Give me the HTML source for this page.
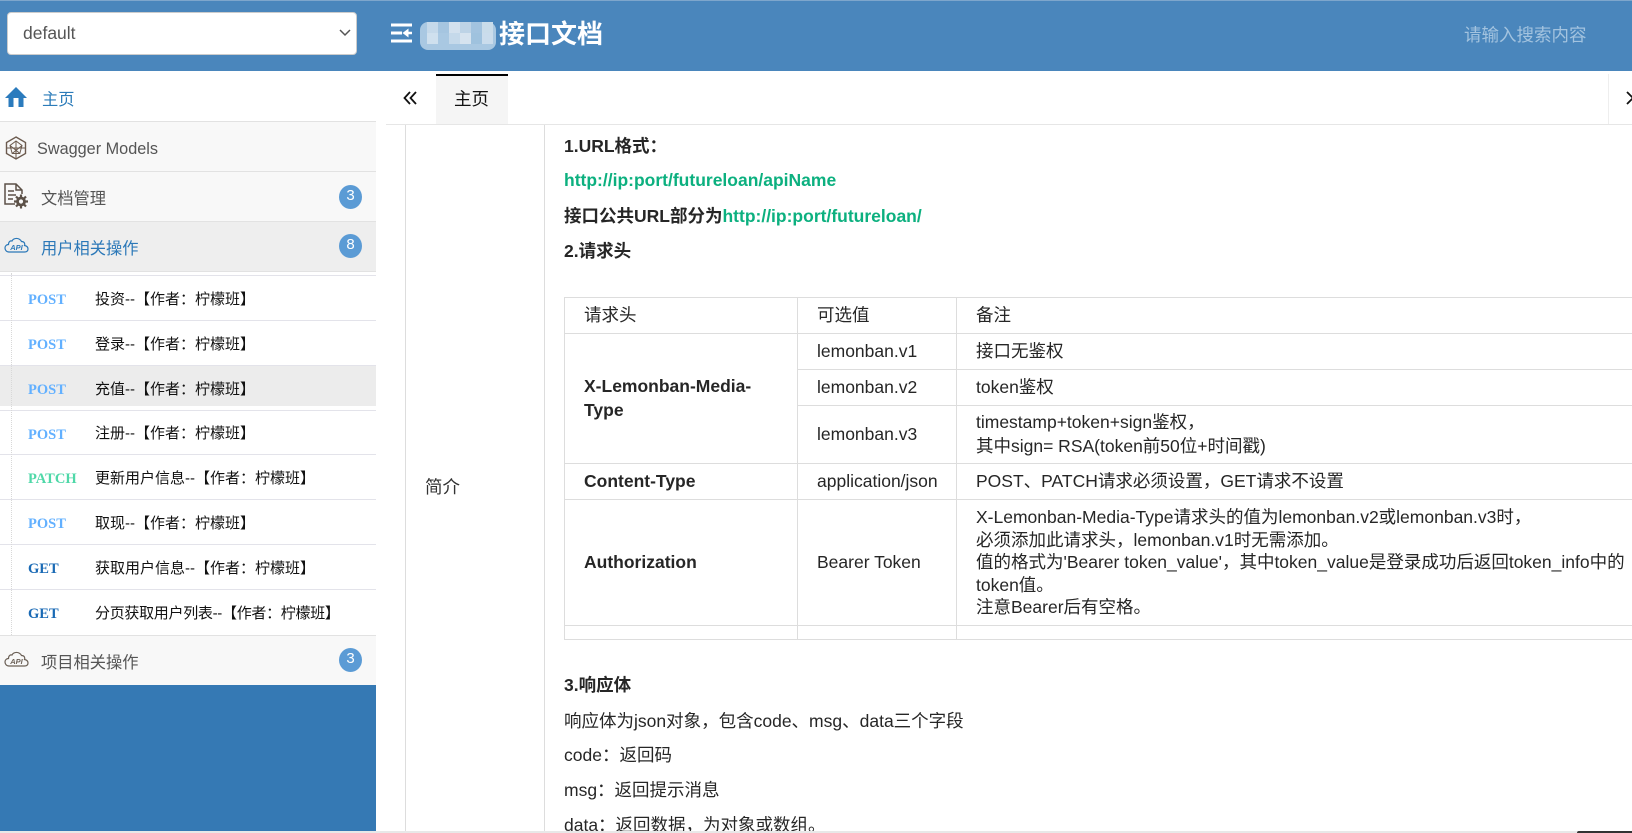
<!DOCTYPE html>
<html lang="zh-CN">
<head>
<meta charset="utf-8">
<title>接口文档</title>
<style>
*{box-sizing:border-box}
html,body{margin:0;padding:0;width:1632px;height:833px;overflow:hidden;background:#fff}
body{position:relative;font-family:"Liberation Sans","Noto Sans CJK SC",sans-serif;color:#262626}
.a{position:absolute;white-space:nowrap}
.hdr{left:0;top:0;width:1632px;height:71px;background:#4a86bc;border-top:1px solid #7ea6cc}
.sel{left:7px;top:12px;width:350px;height:43px;background:#fff;border:1px solid #ccc;border-radius:4px;color:#555;font-size:17.5px;line-height:41px;padding-left:15px}
.m{position:absolute;width:11px;height:11px}
.item{left:0;width:376px;height:50px;background:#f8f8f8;border-bottom:1px solid #e2e2e2;color:#555;font-size:16.25px}
.lbl{position:absolute;left:41px;top:0;line-height:50px}
.badge{position:absolute;left:339px;width:23px;height:24px;border-radius:50%;background:#5b9bd5;color:#fff;font-size:15px;line-height:22px;text-align:center}
.row{left:0;width:376px;height:45px;border-top:1px solid #e3e3ea;font-size:15px;color:#111}
.row b{position:absolute;left:28px;top:2px;line-height:44px;font-family:"Liberation Serif","Noto Serif CJK SC",serif;font-size:14.5px}
.row span{position:absolute;left:95px;top:2px;line-height:44px}
.post{color:#62b0ff}.patch{color:#4fd8a8}.get{color:#1a6ab5}
.p{left:564px;font-size:17.5px;line-height:24px;color:#262626}
.p b{font-weight:bold}
.g{color:#0cb07f;font-weight:bold}
table{position:absolute;left:564px;top:297px;width:1100px;border-collapse:collapse;table-layout:fixed;font-size:17.5px;line-height:23.3px;color:#262626}
td{border:1px solid #ddd;padding:0 0 0 19px;vertical-align:middle;white-space:nowrap}
</style>
</head>
<body>
<div class="a hdr"></div>
<div class="a sel">default</div>
<svg class="a" style="left:339px;top:28px" width="12" height="10" viewBox="0 0 12 10"><path d="M1 2l5 5 5-5" fill="none" stroke="#555" stroke-width="1.500"/></svg>

<svg class="a" style="left:391px;top:23px" width="22" height="20" viewBox="0 0 22 20"><path d="M0 2h21M0 18h21M0 10h11" stroke="#fff" stroke-width="3" fill="none"/><path d="M14 10h7" stroke="#fff" stroke-width="2.500"/><path d="M17.500 5.500l-6 4.500 6 4.500z" fill="#fff"/></svg>
<div class="a" style="left:420px;top:22px;width:76px;height:28px;background:#a9c8e2;border-radius:8px"></div>
<div class="m" style="left:427px;top:22px;background:#c5d9ea"></div><div class="m" style="left:438px;top:22px;background:#a5c5e0"></div><div class="m" style="left:449px;top:22px;background:#d3e1ee"></div><div class="m" style="left:460px;top:22px;background:#bdd3e6"></div><div class="m" style="left:471px;top:22px;background:#a2c3df"></div><div class="m" style="left:482px;top:22px;background:#c9dcea"></div>
<div class="m" style="left:427px;top:33px;background:#cfe0ee"></div><div class="m" style="left:438px;top:33px;background:#a9c8e2"></div><div class="m" style="left:449px;top:33px;background:#c5d9ea"></div><div class="m" style="left:460px;top:33px;background:#d6e3ef"></div><div class="m" style="left:471px;top:33px;background:#9fc2de"></div><div class="m" style="left:482px;top:33px;background:#cadcec"></div>
<div class="a" style="left:499px;top:16px;font-size:26px;line-height:36px;font-weight:bold;color:#fff">接口文档</div>
<div class="a" style="left:1464px;top:23px;font-size:17.5px;line-height:24px;color:#a3c3df">请输入搜索内容</div>

<!-- Sidebar -->
<div class="a" style="left:0;top:71px;width:376px;height:51px;background:#fff;border-bottom:1px solid #e2e2e2"></div>
<svg class="a" style="left:4px;top:86px" width="24" height="22" viewBox="0 0 24 22"><path d="M12 1L1 12h3.500v9h15v-9H23z" fill="#2b7bbd"/><rect x="9.500" y="12" width="5" height="9" fill="#fff"/></svg>
<div class="a" style="left:42px;top:86px;font-size:16.25px;line-height:28px;color:#2b7bb9">主页</div>

<div class="a item" style="top:122px"><span class="lbl" style="left:37px;top:2px;font-size:16.25px">Swagger Models</span></div>
<svg class="a" style="left:5px;top:136px" width="22" height="24" viewBox="0 0 22 24" fill="none" stroke="#6b5a4e" stroke-width="1.400"><path d="M11 1l9.500 5.500v11L11 23l-9.500-5.500v-11z"/><path d="M11 5l6 4.500-2.200 8H7.200L5 9.500zM5 9.500l10 8M17 9.500L7.200 17.500M11 5v18M2 12h18" stroke-width="1"/></svg>

<div class="a item" style="top:172px"><span class="lbl" style="top:2px">文档管理</span><span class="badge" style="top:13px">3</span></div>
<svg class="a" style="left:4px;top:183px" width="25" height="26" viewBox="0 0 25 26" fill="none" stroke="#5c5148" stroke-width="1.500"><path d="M11 21H1V1h11l6 6v4M12 1v6h6M4 8h6M4 12h8M4 16h5"/><circle cx="17" cy="18.500" r="3.500" stroke-width="2.800"/><path d="M17 11.500v3M17 22.500v3M10 18.500h3M21 18.500h3M12 13.500l2 2M20 21.500l2 2M12 23.500l2-2M20 15.500l2-2" stroke-width="2.200"/></svg>

<div class="a item" style="top:222px;background:#eee;color:#2b78b8"><span class="lbl" style="top:2px">用户相关操作</span><span class="badge" style="top:12px">8</span></div>
<svg class="a" style="left:4px;top:236px" width="25" height="18" viewBox="0 0 25 17"><path d="M5 15.500C2 15.500 1 13 1 11.500 1 9.500 2.500 8 4.500 8 4.500 5 6.500 4 8 4.500 9.500 1.500 15 .5 17.500 5 21 5 21 8 20.500 9 23 9.500 24 11 24 12.500 24 14.500 22.500 15.500 20.500 15.500z" fill="none" stroke="#2b78b8" stroke-width="1.200"/><text x="12.500" y="13.300" text-anchor="middle" font-family="Liberation Sans,sans-serif" font-size="7.500" font-style="italic" font-weight="bold" fill="#2b78b8">API</text></svg>

<div class="a" style="left:0;top:272px;width:376px;height:363px;background:#fff"></div>
<div class="a" style="left:0;top:365px;width:376px;height:41px;background:#ececec"></div>

<div class="a row" style="top:275px"><b class="post">POST</b><span>投资--【作者：柠檬班】</span></div>
<div class="a row" style="top:320px"><b class="post">POST</b><span>登录--【作者：柠檬班】</span></div>
<div class="a row" style="top:365px;height:41px"><b class="post">POST</b><span>充值--【作者：柠檬班】</span></div>
<div class="a row" style="top:410px"><b class="post">POST</b><span style="top:1px">注册--【作者：柠檬班】</span></div>
<div class="a row" style="top:454px"><b class="patch">PATCH</b><span>更新用户信息--【作者：柠檬班】</span></div>
<div class="a row" style="top:499px"><b class="post">POST</b><span>取现--【作者：柠檬班】</span></div>
<div class="a row" style="top:544px"><b class="get">GET</b><span>获取用户信息--【作者：柠檬班】</span></div>
<div class="a row" style="top:589px"><b class="get">GET</b><span style="letter-spacing:-.3px">分页获取用户列表--【作者：柠檬班】</span></div>
<div class="a" style="left:11px;top:273px;height:362px;border-left:1px dotted #d8d8d8"></div>

<div class="a item" style="top:635px;border-top:1px solid #e2e2e2;border-bottom:0"><span class="lbl" style="top:2px">项目相关操作</span><span class="badge" style="top:12px">3</span></div>
<svg class="a" style="left:4px;top:650px" width="25" height="18" viewBox="0 0 25 17"><path d="M5 15.500C2 15.500 1 13 1 11.500 1 9.500 2.500 8 4.500 8 4.500 5 6.500 4 8 4.500 9.500 1.500 15 .5 17.500 5 21 5 21 8 20.500 9 23 9.500 24 11 24 12.500 24 14.500 22.500 15.500 20.500 15.500z" fill="none" stroke="#6b6056" stroke-width="1.200"/><text x="12.500" y="13.300" text-anchor="middle" font-family="Liberation Sans,sans-serif" font-size="7.500" font-style="italic" font-weight="bold" fill="#6b6056">API</text></svg>
<div class="a" style="left:0;top:685px;width:376px;height:146px;background:#3579b4"></div>

<!-- Tabs -->
<svg class="a" style="left:403px;top:91px" width="14" height="14" viewBox="0 0 14 14"><path d="M7 1L1.500 7 7 13M13 1L7.500 7 13 13" fill="none" stroke="#111" stroke-width="1.800"/></svg>
<div class="a" style="left:436px;top:74px;width:72px;height:50px;background:#f5f5f5;border-top:2px solid #000"></div>
<div class="a" style="left:454px;top:86px;font-size:17.5px;line-height:26px;color:#111">主页</div>
<div class="a" style="left:1608px;top:74px;width:1px;height:50px;background:#eee"></div>
<svg class="a" style="left:1626px;top:91px" width="6" height="14" viewBox="0 0 6 14"><path d="M1 1l6 6-6 6" fill="none" stroke="#111" stroke-width="1.800"/></svg>
<div class="a" style="left:386px;top:124px;width:1246px;height:1px;background:#e6e6e6"></div>

<!-- Content frame -->
<div class="a" style="left:405px;top:125px;width:1px;height:706px;background:#ddd"></div>
<div class="a" style="left:544px;top:125px;width:1px;height:706px;background:#ddd"></div>
<div class="a" style="left:425px;top:475px;font-size:17.5px;line-height:24px;color:#333">简介</div>

<div class="a p" style="top:134px"><b>1.URL格式：</b></div>
<div class="a p" style="top:168px"><span class="g">http://ip:port/futureloan/apiName</span></div>
<div class="a p" style="top:204px"><b>接口公共URL部分为</b><span class="g">http://ip:port/futureloan/</span></div>
<div class="a p" style="top:239px"><b>2.请求头</b></div>

<table>
<colgroup><col style="width:233px"><col style="width:159px"><col></colgroup>
<tr style="height:36px"><td>请求头</td><td>可选值</td><td>备注</td></tr>
<tr style="height:36px"><td rowspan="3" style="white-space:normal;padding-right:20px"><b>X-Lemonban-Media-Type</b></td><td>lemonban.v1</td><td>接口无鉴权</td></tr>
<tr style="height:36px"><td>lemonban.v2</td><td>token鉴权</td></tr>
<tr style="height:58px"><td>lemonban.v3</td><td>timestamp+token+sign鉴权，<br>其中sign= RSA(token前50位+时间戳)</td></tr>
<tr style="height:36px"><td><b>Content-Type</b></td><td>application/json</td><td>POST、PATCH请求必须设置，GET请求不设置</td></tr>
<tr style="height:126px"><td><b>Authorization</b></td><td>Bearer Token</td><td style="line-height:22.5px">X-Lemonban-Media-Type请求头的值为lemonban.v2或lemonban.v3时，<br>必须添加此请求头，lemonban.v1时无需添加。<br>值的格式为'Bearer token_value'，其中token_value是登录成功后返回token_info中的<br>token值。<br>注意Bearer后有空格。</td></tr>
<tr style="height:14px"><td style="line-height:1px;font-size:1px"></td><td style="line-height:1px;font-size:1px"></td><td style="line-height:1px;font-size:1px"></td></tr>
</table>

<div class="a p" style="top:673px"><b>3.响应体</b></div>
<div class="a p" style="top:709px">响应体为json对象，包含code、msg、data三个字段</div>
<div class="a p" style="top:743px">code：返回码</div>
<div class="a p" style="top:778px">msg：返回提示消息</div>
<div class="a p" style="top:813px">data：返回数据，为对象或数组。</div>

<div class="a" style="left:0;top:831px;width:1632px;height:2px;background:#e8e8e8"></div>
<div class="a" style="left:1577px;top:831px;width:55px;height:2px;background:#333;border-radius:3px 0 0 0"></div>
</body>
</html>
